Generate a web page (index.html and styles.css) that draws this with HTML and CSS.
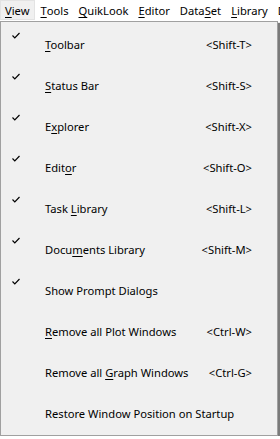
FILE: index.html
```html
<!DOCTYPE html>
<html lang="en">
<head>
    <meta charset="UTF-8">
    <title>View Menu</title>
    <link rel="stylesheet" href="styles.css">
</head>
<body>
    <nav class="menubar">
        <span class="menu-title open"><u>V</u>iew</span>
        <span class="menu-title"><u>T</u>ools</span>
        <span class="menu-title"><u>Q</u>uikLook</span>
        <span class="menu-title"><u>E</u>ditor</span>
        <span class="menu-title">Data<u>S</u>et</span>
        <span class="menu-title"><u>L</u>ibrary</span>
        <span class="menu-title">D</span>
    </nav>

    <ul class="popup">
        <li class="item checked"><span class="check"></span><span class="label"><u>T</u>oolbar</span><span class="key">&lt;Shift-T&gt;</span></li>
        <li class="item checked"><span class="check"></span><span class="label"><u>S</u>tatus Bar</span><span class="key">&lt;Shift-S&gt;</span></li>
        <li class="item checked"><span class="check"></span><span class="label">E<u>x</u>plorer</span><span class="key">&lt;Shift-X&gt;</span></li>
        <li class="item checked"><span class="check"></span><span class="label">Edit<u>o</u>r</span><span class="key">&lt;Shift-O&gt;</span></li>
        <li class="item checked"><span class="check"></span><span class="label">Task <u>L</u>ibrary</span><span class="key">&lt;Shift-L&gt;</span></li>
        <li class="item checked"><span class="check"></span><span class="label">Docu<u>m</u>ents Library</span><span class="key">&lt;Shift-M&gt;</span></li>
        <li class="item checked"><span class="check"></span><span class="label">Show Prompt Dialogs</span><span class="key"></span></li>
        <li class="item"><span class="check"></span><span class="label"><u>R</u>emove all Plot Windows</span><span class="key">&lt;Ctrl-W&gt;</span></li>
        <li class="item"><span class="check"></span><span class="label">Remove all <u>G</u>raph Windows</span><span class="key">&lt;Ctrl-G&gt;</span></li>
        <li class="item"><span class="check"></span><span class="label">Restore Window Position on Startup</span><span class="key"></span></li>
    </ul>
</body>
</html>
```

FILE: styles.css
```css
body {
    margin: 0;
    background-color: white;
    font-family: 'Noto Sans', 'Open Sans', sans-serif;
    font-size: 11.2px;
    color: black;
    overflow: hidden;
}

u {
    text-decoration-thickness: 1px;
    text-underline-offset: 2px;
}

.menubar {
    display: flex;
    height: 21px;
    align-items: stretch;
    white-space: nowrap;
    overflow: hidden;
}

.menu-title {
    display: flex;
    align-items: center;
    padding: 0 5px;
    height: 20px;
}

.menu-title.open {
    padding: 0 6px 0 5px;
    background-color: #f0f0f0;
    box-shadow: inset 0 0 0 1px #e3e3e3;
}

.popup {
    list-style: none;
    margin: 0;
    padding: 2px 0 1px;
    width: 276px;
    height: 410px;
    background-color: #f0f0f0;
    border: 1px solid #a0a0a0;
    box-shadow: 2px 2px 1px #7a7a7a;
}

.item {
    display: grid;
    grid-template-columns: 44px 1fr auto;
    height: 41px;
    padding-right: 25px;
    align-items: center;
    white-space: nowrap;
}

.check {
    align-self: start;
    height: 8px;
    margin: 7px 0 0 11px;
    width: 8px;
}

.checked .check {
    background: no-repeat center / 8px 7px url("data:image/svg+xml,%3Csvg xmlns='http://www.w3.org/2000/svg' viewBox='0 0 8 7'%3E%3Cpath d='M0.5 3.5 L2.8 5.8 L7.5 1' fill='none' stroke='black' stroke-width='1.2'/%3E%3C/svg%3E");
}

.key {
    text-align: right;
}
```
